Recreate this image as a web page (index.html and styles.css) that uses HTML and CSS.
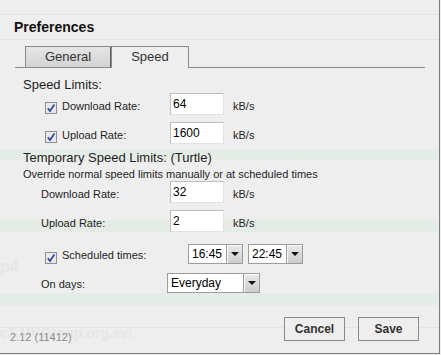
FILE: index.html
```html
<!DOCTYPE html>
<html lang="en">
<head>
    <meta charset="UTF-8">
    <title>Preferences</title>
    <link rel="stylesheet" href="styles.css">
</head>
<body>
    <div class="dialog">
        <!-- list rows showing through the dialog -->
        <span class="ghost ghost-p4">p4</span>
        <span class="ghost ghost-avi">c3.MVGroup.org.avi</span>

        <h2 class="title">Preferences</h2>

        <ul class="tabs">
            <li class="tab tab-general">General</li>
            <li class="tab tab-speed">Speed</li>
        </ul>

        <div class="panel">
            <div class="section-title">Speed Limits:</div>

            <div class="row first">
                <div class="lead">
                    <svg class="check" width="12" height="12" viewBox="0 0 12 12"><rect x="0.5" y="0.5" width="11" height="11" fill="#e8e9ef" stroke="#8d8f92"/><path d="M2.8 6.2 L5 9 L9.4 2.6" fill="none" stroke="#2d4aa0" stroke-width="1.7"/></svg>
                    <label>Download Rate:</label>
                </div>
                <input class="rate" type="text" value="64">
                <span class="unit">kB/s</span>
            </div>

            <div class="row">
                <div class="lead">
                    <svg class="check" width="12" height="12" viewBox="0 0 12 12"><rect x="0.5" y="0.5" width="11" height="11" fill="#e8e9ef" stroke="#8d8f92"/><path d="M2.8 6.2 L5 9 L9.4 2.6" fill="none" stroke="#2d4aa0" stroke-width="1.7"/></svg>
                    <label>Upload Rate:</label>
                </div>
                <input class="rate" type="text" value="1600">
                <span class="unit">kB/s</span>
            </div>

            <div class="section-title turtle">Temporary Speed Limits: (Turtle)</div>
            <div class="note">Override normal speed limits manually or at scheduled times</div>

            <div class="row flush">
                <div class="lead">
                    <label class="plain">Download Rate:</label>
                </div>
                <input class="rate" type="text" value="32">
                <span class="unit">kB/s</span>
            </div>

            <div class="row">
                <div class="lead">
                    <label class="plain">Upload Rate:</label>
                </div>
                <input class="rate" type="text" value="2">
                <span class="unit">kB/s</span>
            </div>

            <div class="row schedule">
                <div class="lead lead-wide">
                    <svg class="check" width="12" height="12" viewBox="0 0 12 12"><rect x="0.5" y="0.5" width="11" height="11" fill="#e8e9ef" stroke="#8d8f92"/><path d="M2.8 6.2 L5 9 L9.4 2.6" fill="none" stroke="#2d4aa0" stroke-width="1.7"/></svg>
                    <label>Scheduled times:</label>
                </div>
                <div class="select select-time"><span class="select-value">16:45</span><span class="select-arrow"></span></div>
                <div class="select select-time"><span class="select-value">22:45</span><span class="select-arrow"></span></div>
            </div>

            <div class="row days">
                <div class="lead lead-narrow">
                    <label class="plain">On days:</label>
                </div>
                <div class="select select-days"><span class="select-value">Everyday</span><span class="select-arrow"></span></div>
            </div>
        </div>

        <div class="footer">
            <span class="version">2.12 (11412)</span>
            <div class="buttons">
                <button>Cancel</button>
                <button>Save</button>
            </div>
        </div>
    </div>
</body>
</html>
```

FILE: styles.css
```css
* {
    box-sizing: border-box;
}

body {
    margin: 0;
    background-color: #eeeeee;
    font-family: "Liberation Sans", Arial, sans-serif;
    color: #1e1e1e;
}

/* Dialog with the torrent list faintly behind it */
.dialog {
    position: relative;
    z-index: 0;
    width: 440px;
    height: 354px;
    border-right: 1px solid #7c7c7c;
    border-bottom: 1px solid #7c7c7c;
    background:
        linear-gradient(#e4e4e4, #e4e4e4) 0 14px / 100% 1px no-repeat,
        linear-gradient(#e4e4e4, #e4e4e4) 0 39px / 100% 1px no-repeat,
        linear-gradient(#e5ebe5, #e5ebe5) 0 149px / 100% 11px no-repeat,
        linear-gradient(#e5ebe5, #e5ebe5) 0 220px / 100% 12px no-repeat,
        linear-gradient(#e5ebe5, #e5ebe5) 0 293px / 100% 12px no-repeat,
        linear-gradient(#e4e4e4, #e4e4e4) 0 327px / 100% 1px no-repeat,
        #eeeeee;
}

.ghost {
    position: absolute;
    z-index: -1;
    font-weight: bold;
    color: #e6e6e6;
    white-space: nowrap;
}

.ghost-p4 {
    left: 0;
    top: 258px;
    font-size: 16px;
}

.ghost-avi {
    left: 0;
    top: 325px;
    font-size: 14px;
}

.title {
    margin: 0;
    padding: 19px 0 0 14px;
    font-size: 14px;
    line-height: 16px;
    font-weight: bold;
    color: #111;
}

/* Tabs */
.tabs {
    list-style: none;
    display: flex;
    width: 410px;
    margin: 11px 0 0 15px;
    padding: 0 0 0 10px;
    border-bottom: 1px solid #8a8a8a;
}

.tab {
    height: 21px;
    border: 1px solid #8a8a8a;
    border-bottom: none;
    font-size: 13px;
    line-height: 20px;
    text-align: center;
    color: #333;
    background: linear-gradient(#e6e6e6, #d3d3d3);
}

.tab-general {
    width: 86px;
    border-right-color: #606060;
}

.tab-speed {
    width: 78px;
    height: 22px;
    margin-bottom: -1px;
    background: #eeeeee;
}

/* Speed panel */
.panel {
    padding-left: 23px;
}

.section-title {
    margin-top: 9px;
    font-size: 13px;
    line-height: 15px;
}

.section-title.turtle {
    margin-top: 6px;
}

.note {
    margin-top: 3px;
    font-size: 11px;
    line-height: 13px;
}

.row {
    display: flex;
    align-items: center;
    height: 22px;
    margin-top: 7px;
}

.row.first {
    margin-top: 1px;
}

.row.flush {
    margin-top: 0;
}

.row.schedule {
    height: 20px;
    margin-top: 12px;
}

.row.days {
    height: 20px;
    margin-top: 9px;
}

.lead {
    display: flex;
    align-items: center;
    width: 147px;
    padding-top: 4px;
    font-size: 11px;
    line-height: 13px;
}

.lead-wide {
    width: 165px;
    padding-top: 3px;
}

.lead-narrow {
    width: 144px;
    padding-top: 3px;
}

.check {
    flex: none;
    margin: 4px 5px 0 22px;
}

.lead-wide .check {
    margin-top: 5px;
}

.plain {
    margin-left: 18px;
}

.rate {
    width: 54px;
    height: 22px;
    padding: 0 2px;
    border: 1px solid;
    border-color: #bdbdbd #e2e2e2 #e2e2e2 #bdbdbd;
    background: #fff;
    font-family: "Liberation Sans", Arial, sans-serif;
    font-size: 12px;
    color: #000;
    outline: none;
}

.unit {
    margin-left: 9px;
    padding-top: 4px;
    font-size: 11px;
}

/* Drop-down boxes */
.select {
    display: flex;
    height: 20px;
    border: 1px solid #9c9c9c;
    background: #fff;
}

.select-time {
    width: 55px;
}

.select-time + .select-time {
    margin-left: 5px;
}

.select-days {
    width: 93px;
}

.select-value {
    flex: 1;
    padding-left: 3px;
    font-size: 12px;
    line-height: 18px;
    color: #000;
}

.select-arrow {
    display: flex;
    align-items: center;
    justify-content: center;
    width: 16px;
    border-left: 1px solid #9c9c9c;
    background: linear-gradient(#e9e9e9, #cdcdcd);
    box-shadow: inset 1px 1px 0 #fafafa;
}

.select-arrow::after {
    content: "";
    border-left: 4px solid transparent;
    border-right: 4px solid transparent;
    border-top: 4px solid #111;
}

/* Footer */
.footer {
    display: flex;
    align-items: flex-start;
    margin-top: 24px;
    padding: 0 20px 0 10px;
}

.version {
    margin-top: 14px;
    font-size: 11px;
    line-height: 13px;
    color: #8a8a8a;
}

.buttons {
    display: flex;
    gap: 13px;
    margin-left: auto;
}

.buttons button {
    width: 61px;
    height: 24px;
    padding: 0;
    border: 1px solid #8a8a8a;
    background: #eeeeee;
    font-family: "Liberation Sans", Arial, sans-serif;
    font-size: 12px;
    font-weight: bold;
    color: #333;
}
```
